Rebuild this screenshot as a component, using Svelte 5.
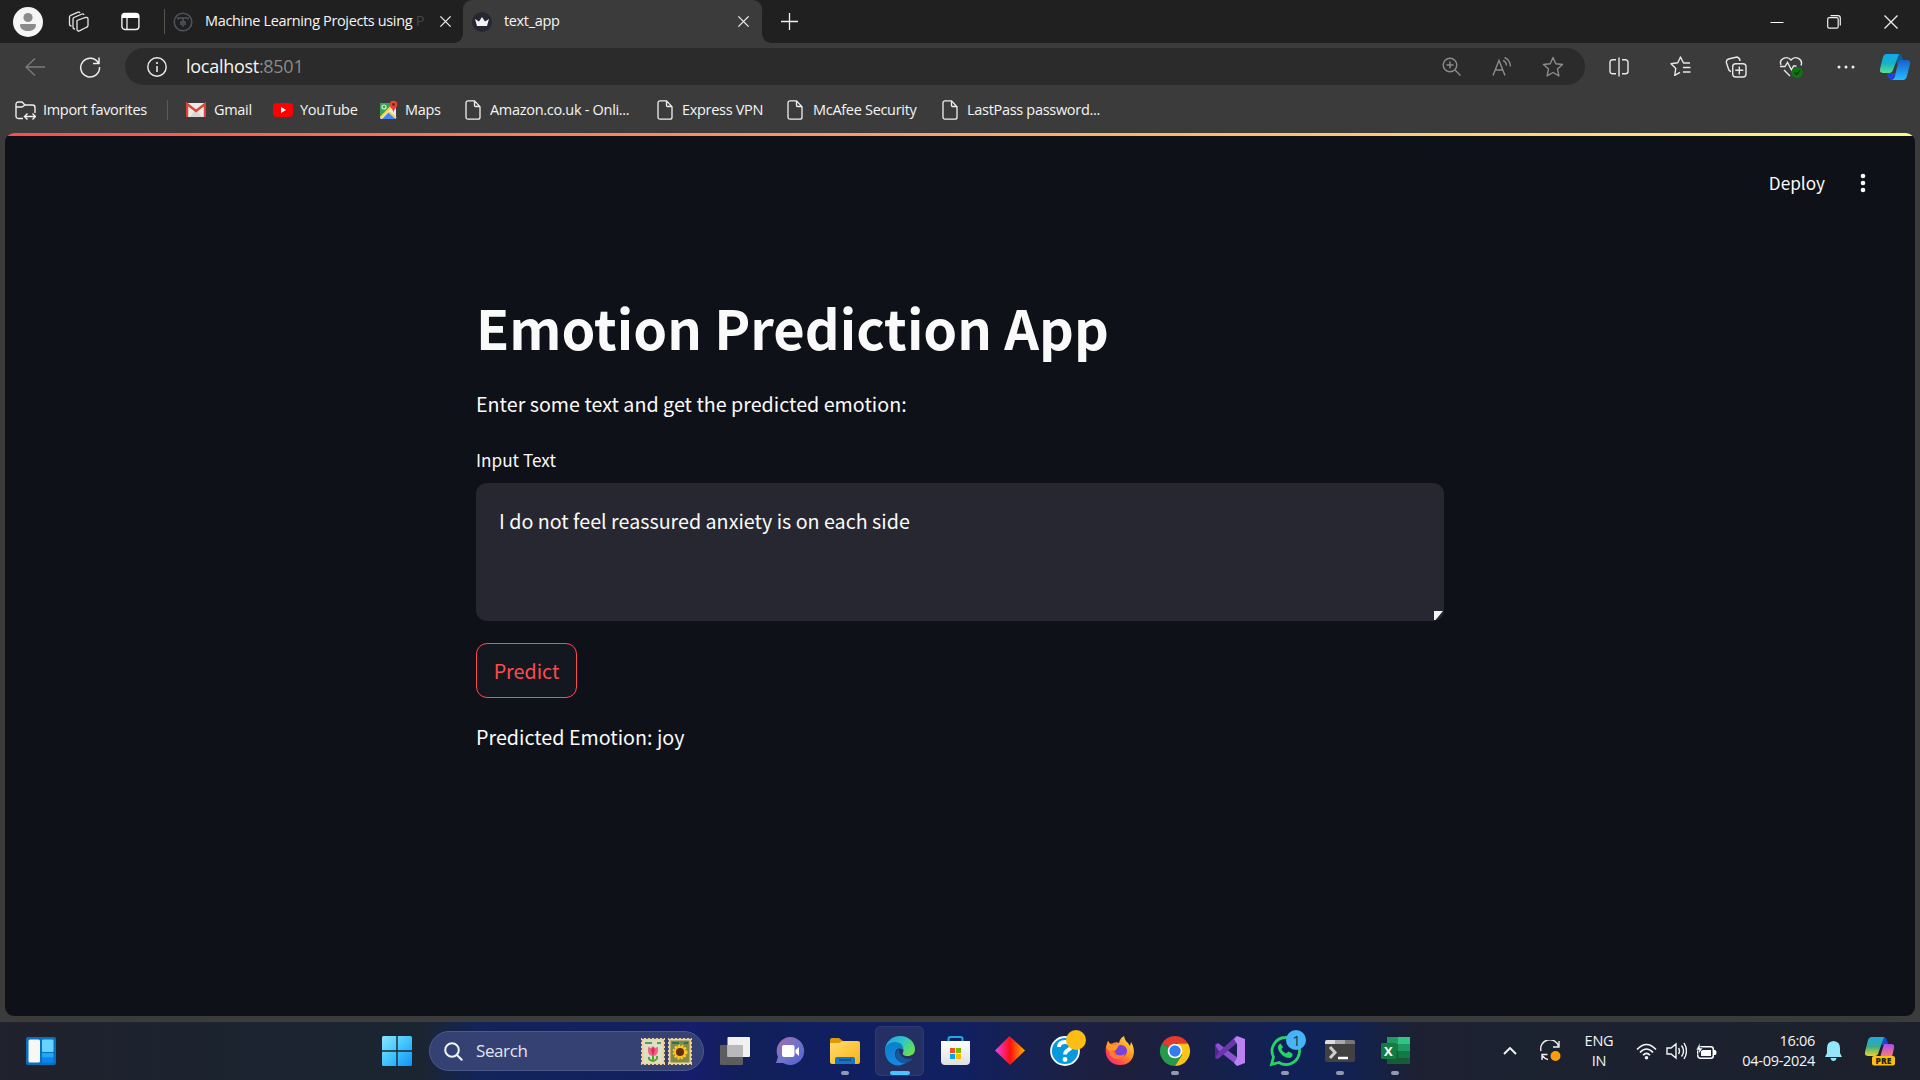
<script>
  const bookmarks = [
    { label: 'Gmail', icon: 'gmail', cls: 'b-gmail' },
    { label: 'YouTube', icon: 'youtube', cls: 'b-youtube' },
    { label: 'Maps', icon: 'maps', cls: 'b-maps' },
    { label: 'Amazon.co.uk - Onli...', icon: 'page', cls: 'b-amazon' },
    { label: 'Express VPN', icon: 'page', cls: 'b-vpn' },
    { label: 'McAfee Security', icon: 'page', cls: 'b-mcafee' },
    { label: 'LastPass password...', icon: 'page', cls: 'b-lastpass' },
  ];
  const apps = [
    { id: 'taskview' }, { id: 'chat' }, { id: 'explorer', open: true }, { id: 'edge', active: true },
    { id: 'store' }, { id: 'diamond' }, { id: 'help' }, { id: 'firefox' }, { id: 'chrome', open: true },
    { id: 'vs' }, { id: 'whatsapp', open: true }, { id: 'terminal', open: true }, { id: 'excel', open: true },
  ];
  const stampEdge = [2, 6, 10, 14, 18, 22];
  let input = $state('I do not feel reassured anxiety is on each side');
</script>

{#snippet cross(size)}
  <svg width={size} height={size} viewBox="0 0 14 14" fill="none" stroke="#eee" stroke-width="1.4"><path d="M1.5 1.5 12.5 12.5M12.5 1.5 1.5 12.5" /></svg>
{/snippet}

{#snippet bookmarkIcon(name)}
  {#if name === 'gmail'}
    <svg width="20" height="16" viewBox="0 0 20 16"><rect x="1" y="1" width="18" height="14" rx="1" fill="#eceae7" /><path d="M4 15 9 8h2l5 7z" fill="#d8d6d3" /><path d="M1 15V2l9 7 9-7v13" fill="none" stroke="#d9453b" stroke-width="2.4" /></svg>
  {:else if name === 'youtube'}
    <svg width="20" height="14" viewBox="0 0 20 14"><rect width="20" height="14" rx="3.5" fill="#f00" /><path d="m8 4 5 3-5 3z" fill="#fff" /></svg>
  {:else if name === 'maps'}
    <svg width="20" height="20" viewBox="0 0 20 20"><rect x="1" y="3" width="16" height="16" rx="1.5" fill="#e8eaed" /><path d="M1 17V4.500Q1 3 2.500 3H14L2 18z" fill="#34a353" /><path d="m3 19 7-7 7 7z" fill="#4485f3" /><path d="m1.500 17.500 13-13M10 12l7 6" stroke="#fdd24a" stroke-width="2" /><circle cx="5" cy="7" r="2" fill="none" stroke="#d9f1df" stroke-width="1.200" /><path d="M14.500 13C14.500 9 10.700 8 10.700 4.500a3.800 3.800 0 0 1 7.600 0C18.300 8 14.500 9 14.500 13z" fill="#e64435" /><circle cx="14.500" cy="4.500" r="1.400" fill="#7c1f18" /></svg>
  {:else}
    <svg width="16" height="20" viewBox="0 0 16 20" fill="none" stroke="#f0f0f0" stroke-width="1.300"><path d="M3 .8h6.500l5.500 6V17.200a2 2 0 0 1-2 2H3a2 2 0 0 1-2-2V2.800a2 2 0 0 1 2-2zM9.500 1v4.500a1 1 0 0 0 1 1H15" /></svg>
  {/if}
{/snippet}

{#snippet appIcon(id)}
  <svg width="36" height="36" viewBox="0 0 36 36">
    {#if id === 'taskview'}
      <rect x="3" y="12" width="23" height="20" rx="1" fill="#5d5d60" /><rect x="10.500" y="4" width="22.500" height="20" rx="1" fill="#f1f1f1" /><rect x="10.500" y="12" width="15.500" height="12" fill="#b9b9bb" />
    {:else if id === 'chat'}
      <defs><linearGradient id="chat" x1="0" y1="0" x2="1" y2="1"><stop stop-color="#a76ba6" /><stop offset=".5" stop-color="#7373ca" /><stop offset="1" stop-color="#4e5fd2" /></linearGradient></defs>
      <path d="M18 4a14 14 0 1 1-7 26H4l2-6A14 14 0 0 1 18 4z" fill="url(#chat)" /><rect x="10" y="12" width="12.500" height="12" rx="2" fill="#fff" /><path d="m23.500 17 3.500-3v9l-3.500-3z" fill="#fff" />
    {:else if id === 'explorer'}
      <defs><linearGradient id="folder" x1="0" y1="0" x2="1" y2="1"><stop stop-color="#ffdc70" /><stop offset="1" stop-color="#f8b414" /></linearGradient></defs>
      <path d="M3 7q0-2 2-2h7l4 3v7H3z" fill="#dc9a09" /><path d="M3 10h9l4-2h15q2 0 2 2v19q0 2-2 2H5q-2 0-2-2z" fill="url(#folder)" /><path d="M8 31v-5q0-2 2-2h16q2 0 2 2v5z" fill="#1676c5" /><path d="M12 27h12" stroke="#0c4584" stroke-width="1.300" />
    {:else if id === 'edge'}
      <defs><linearGradient id="edgetop" x1="0" y1="0" x2="1" y2=".6"><stop stop-color="#2999e8" /><stop offset=".5" stop-color="#2bc4cf" /><stop offset="1" stop-color="#66df52" /></linearGradient><linearGradient id="edgeblue" x1="0" y1="0" x2="0" y2="1"><stop stop-color="#087fc9" /><stop offset="1" stop-color="#1689e4" /></linearGradient></defs>
      <path d="M3 18C3 9 10 3 18 3c9 0 15 6.500 15 13 0 5-3.500 7-7 7-4 0-6-1.500-5-3.500C23 16 19 12 14 12c-5 0-9 2-11 6z" fill="url(#edgetop)" />
      <path d="M3 18c0-6 5-9 10-9 6 0 9 4 8 8-4-3-8-1-8 4 0 6 6 10 12 8-10 8-22 1-22-11z" fill="url(#edgeblue)" />
      <path d="M17 16c-5 3-4 10 2 14 5 1 9-1 12-5-7 3-14-1-14-9z" fill="#135a9d" />
    {:else if id === 'store'}
      <defs><linearGradient id="bag" x1="0" y1="0" x2="0" y2="1"><stop stop-color="#fff" /><stop offset="1" stop-color="#dedfe1" /></linearGradient></defs>
      <path d="M11.500 10V6q0-2 2-2h10q2 0 2 2v4" fill="none" stroke="#21a9e2" stroke-width="2" /><path d="M4 8h29v20q0 4-4 4H8q-4 0-4-4z" fill="url(#bag)" /><path d="M13 15h5v5h-5z" fill="#f25022" /><path d="M19 15h5v5h-5z" fill="#7fba00" /><path d="M13 21h5v5h-5z" fill="#00a4ef" /><path d="M19 21h5v5h-5z" fill="#ffb900" />
    {:else if id === 'diamond'}
      <defs><linearGradient id="dia"><stop stop-color="#f43df0" /><stop offset=".5" stop-color="#fa1010" /><stop offset="1" stop-color="#ffb000" /></linearGradient></defs><path d="M17.500 3 33 17.500 18 32 3 17.500z" fill="url(#dia)" />
    {:else if id === 'help'}
      <circle cx="18" cy="18" r="14" fill="#0699dc" stroke="#f4fbff" stroke-width="1.800" /><path d="M12 14q0-5 6-5 6 0 6 4.500c0 4-6 3-6 8" fill="none" stroke="#fff" stroke-width="3.800" /><circle cx="18" cy="26.500" r="2.400" fill="#fff" /><circle cx="29" cy="7" r="10" fill="#fdbd13" />
    {:else if id === 'firefox'}
      <defs><linearGradient id="fox" x1="1" y1="0" x2="0" y2="1"><stop stop-color="#fff35a" /><stop offset=".4" stop-color="#ff9a24" /><stop offset=".7" stop-color="#ff4a4b" /><stop offset="1" stop-color="#e819a0" /></linearGradient></defs>
      <path d="M6 8q1 3 3 3 5-3 8-1 1-5 5-7 1 5 4 7l2 3 1-4c6 9 3 23-11 23C6 32 0 20 6 8z" fill="url(#fox)" /><circle cx="19" cy="18" r="6" fill="#7542db" /><path d="M6 11c4 0 6-1 10 2-3 1-4 3-6 3 2 6 8 8 13 5-2 7-13 7-16-1-2-4-1-7-1-9z" fill="#ff7732" /><path d="m4 15 2-7 3 4 8 0-3 5-6 1z" fill="#ff9a27" />
    {:else if id === 'chrome'}
      <path d="M18 18 5 10.500A15 15 0 0 1 31 10.500H18z" fill="#e33b2e" /><path d="M5 10.500A15 15 0 0 0 18 33l7-11-7-4z" fill="#249b4b" /><path d="M31 10.500A15 15 0 0 1 18 33l7-11-5-11.500z" fill="#fcc419" /><circle cx="18" cy="18" r="7.300" fill="#fff" /><circle cx="18" cy="18" r="5.700" fill="#327cf0" />
    {:else if id === 'vs'}
      <path d="m3 12 3-2 20 15-1 7L3 15z" fill="#8b51cf" /><path d="M3 11v14l3 1 19-16-1-7L7 19z" fill="#6837a8" /><path d="m25 3 8 3v24l-8 3-3-3 3-5V11l-3-5z" fill="#b982f0" /><path d="m3 12 4 7-4 6z" fill="#582092" />
    {:else if id === 'whatsapp'}
      <path d="M18 4.500a13.500 13.500 0 1 1-6 25L4.500 31.500l2-7.500A13.500 13.500 0 0 1 18 4.500z" fill="none" stroke="#25d366" stroke-width="2.800" /><path d="M13.500 10.500q-4 2-2 6.500c2 5 7 8 11 8 3 0 4-4 2-5l-3-1.500-2.500 2c-2-1-4-3-4.500-4.500l1.500-2z" fill="#25d366" /><circle cx="29" cy="7" r="10" fill="#45b5f8" /><text x="29.500" y="12.500" text-anchor="middle" class="badge-text">1</text>
    {:else if id === 'terminal'}
      <path d="M3 9q0-2 2-2h26q2 0 2 2v18q0 2-2 2H5q-2 0-2-2z" fill="#414141" /><path d="M3 11V9q0-2 2-2h8v4z" fill="#dedede" /><path d="M13 7h10v4H13z" fill="#a9a9a9" /><path d="M23 7h8q2 0 2 2v2H23z" fill="#777" /><path d="m8 14 5 5.500-5 5.500" fill="none" stroke="#cfcfcf" stroke-width="3" /><path d="M16 25h10" stroke="#fff" stroke-width="2.500" />
    {:else if id === 'excel'}
      <path d="M10 4h23v27H10z" fill="#185c37" /><path d="M10 4h11v7H10zM21 11h12v7H21z" fill="#219962" /><path d="M21 4h12v7H21z" fill="#33c481" /><path d="M10 11h11v7H10z" fill="#19784a" /><path d="M21 18h12v7H21z" fill="#107c41" /><rect x="4" y="10" width="15.500" height="16" rx="1.500" fill="#117d43" /><text x="11.300" y="22.500" text-anchor="middle" class="excel-text">X</text>
    {/if}
  </svg>
{/snippet}

{#snippet stamp(kind)}
  <svg width="24" height="27" viewBox="0 0 24 27">
    <rect width="24" height="27" fill="#f2d39b" />
    {#each stampEdge as p}
      <circle cx={p} cy="0" r="1.100" fill="#354274" /><circle cx={p} cy="27" r="1.100" fill="#354274" />
      <circle cx="0" cy={p + 1} r="1.100" fill="#354274" /><circle cx="24" cy={p + 1} r="1.100" fill="#354274" />
    {/each}
    {#if kind === 'tulip'}
      <rect x="2.500" y="2.500" width="19" height="22" fill="#dce0c4" /><path d="M4 5h7M16 5h4" stroke="#4c9d72" stroke-width="2" /><path d="M12 24v-8M12 23q-5-1-4-4M12 23q5-1 4-5" stroke="#55a13a" stroke-width="2" fill="none" /><path d="m7 9 3 1 2-2 2 2 3-1q1 9-5 9T7 9z" fill="#f06288" /><path d="m10 12 2-3 2 3-2 6z" fill="#d62f58" />
    {:else}
      <rect x="2.500" y="2.500" width="19" height="22" fill="#7e8c48" /><path d="M4 5h7M16 5h4" stroke="#2b735a" stroke-width="2" /><circle cx="12" cy="14" r="6" fill="#ffb91b" stroke="#ffc928" stroke-width="3" stroke-dasharray="2 1.200" /><circle cx="12" cy="14" r="4" fill="#652c18" />
    {/if}
  </svg>
{/snippet}

<div class="screen">
  <header class="titlebar">
    <div class="cell profile"><svg width="30" height="30" viewBox="0 0 30 30"><circle cx="15" cy="15" r="15" fill="#f5f5f5" /><circle cx="15" cy="10.500" r="4.600" fill="#8a8a8a" /><path d="M8 17h14q1 0 1 1c0 4-4 6-8 6s-8-2-8-6q0-1 1-1z" fill="#8a8a8a" /></svg></div>
    <div class="cell workspaces"><svg width="22" height="22" viewBox="0 0 22 22" fill="none" stroke="#e5e5e5" stroke-width="1.300"><path d="m10 9.500 8.500-3q2.500-.5 2.500 1.500v6.500q0 1.500-2 2l-6.500 3.300q-2.500.8-2.500-1.800zM6 16.500V8q0-1 1-1.500l8-3.500q1.500-.5 2 1M2.500 13V6q0-1.200 1.200-1.700L11 1.200q1.500-.5 2 .8M2.500 13q0 2 2 2M6 16q0 2 2 2" /></svg></div>
    <div class="cell tabs-menu"><svg width="19" height="19" viewBox="0 0 19 19"><rect x=".9" y="1.500" width="17" height="16" rx="3" fill="none" stroke="#f3f3f3" stroke-width="1.400" /><path d="M1 6V4q0-3 3-3h11q3 0 3 3v2z" fill="#fff" /><path d="M6 6v11.500" stroke="#f3f3f3" stroke-width="1.300" /></svg></div>
    <div class="tab-divider"></div>
    <div class="tab inactive">
      <svg width="20" height="20" viewBox="0 0 20 20" fill="none" stroke="#4d535d"><circle cx="10" cy="10" r="8.800" stroke-width="1.600" /><path d="M5 7.500V6h10v1.500M10 6v8.500M8 9v4M12 9v4" stroke-width="1.700" /></svg>
      <span class="ml-title">Machine Learning Projects using <i>P</i></span>
      {@render cross(13)}
    </div>
    <div class="tab active">
      <svg width="20" height="20" viewBox="0 0 20 20"><circle cx="10" cy="10" r="10" fill="#262730" /><path d="m3 7 4 2.500L10 5l3 4.500L17 7l-2 7H5z" fill="#f3f3f3" /></svg>
      <span class="app-title">text_app</span>
      {@render cross(13)}
    </div>
    <svg class="new-tab" width="17" height="17" viewBox="0 0 17 17" stroke="#eee" stroke-width="1.300"><path d="M8.500 0v17M0 8.500h17" /></svg>
    <div class="window-controls">
      <svg width="14" height="14" viewBox="0 0 14 14"><path d="M.5 7.500h13" stroke="#fff" /></svg>
      <svg width="14" height="14" viewBox="0 0 14 14" fill="none" stroke="#f1f1f1" stroke-width="1.200"><rect x=".7" y="2.700" width="10.500" height="10.500" rx="1.500" /><path d="M3.500.7H11q2.300 0 2.300 2.300v7.500" /></svg>
      <svg width="14" height="14" viewBox="0 0 14 14" fill="none" stroke="#eee" stroke-width="1.300"><path d="m.5.5 13 13m0-13-13 13" /></svg>
    </div>
  </header>

  <nav class="toolbar">
    <svg class="back" width="20" height="20" viewBox="0 0 20 20" fill="none" stroke="#7c7c7c" stroke-width="1.300"><path d="M20 10H1M10 1.500 1 10l9 8.500" /></svg>
    <svg class="reload" width="22" height="22" viewBox="0 0 22 22" fill="none" stroke="#ededed" stroke-width="1.500"><path d="M19.500 7.300A9.400 9.400 0 1 0 20.500 11M20 1.500v6h-6" /></svg>
    <div class="address">
      <svg width="20" height="20" viewBox="0 0 20 20"><circle cx="10" cy="10" r="9.200" fill="none" stroke="#eee" stroke-width="1.400" /><path d="M10 9v6" stroke="#eee" stroke-width="1.500" /><circle cx="10" cy="6" r="1.100" fill="#eee" /></svg>
      <span class="url">localhost<em>:8501</em></span>
      <div class="address-tools">
        <svg width="20" height="20" viewBox="0 0 20 20" fill="none" stroke="#8c8c8c" stroke-width="1.400"><circle cx="8" cy="8" r="6.800" /><path d="m13 13 5.500 5.500M8 4.500v7M4.500 8h7" /></svg>
        <svg width="20" height="20" viewBox="0 0 20 20" fill="none" stroke="#8c8c8c" stroke-width="1.400"><path d="m1 18.500 6-15 6 15M3 13h8M11 3.500q3 1 3.500 5M12.500.5q5.500 2 6 9" /></svg>
        <svg width="22" height="22" viewBox="0 0 22 22" fill="none" stroke="#8c8c8c" stroke-width="1.400" stroke-linejoin="round"><path d="m11 1.500 2.800 6.200 6.700.8-5 4.600 1.400 6.700L11 16.500l-5.900 3.300 1.400-6.700-5-4.600 6.700-.8z" /></svg>
      </div>
    </div>
    <div class="actions">
      <svg width="20" height="20" viewBox="0 0 20 20" fill="none" stroke="#e8e8e8" stroke-width="1.400"><path d="M7 2.700H3.500a2.500 2.500 0 0 0-2.500 2.500v9a2.500 2.500 0 0 0 2.500 2.500H7M10 .5v19M13 2.700h3.500A2.500 2.500 0 0 1 19 5.200v9a2.500 2.500 0 0 1-2.500 2.500H13" /></svg>
      <svg width="21" height="21" viewBox="0 0 21 21" fill="none" stroke="#e8e8e8" stroke-width="1.400" stroke-linejoin="round"><path d="M20 7h-6.500L10.500 1 7.800 6.800 1 7.700l4.800 4.700-1.100 7 5.300-3M13 11.500h7.500M13 16h7.500" /></svg>
      <svg width="22" height="22" viewBox="0 0 22 22" fill="none" stroke="#e8e8e8" stroke-width="1.400"><rect x="7.700" y="7.700" width="13.300" height="13.300" rx="3" /><path d="M14.300 10.500v8M10.300 14.300h8M15 5q0-3-3-4L3.500 3Q.8 4 1.500 7l2 6q.5 2 2.500 2.500" /></svg>
      <svg width="24" height="24" viewBox="0 0 24 24" fill="none" stroke="#e8e8e8" stroke-width="1.400"><path d="M2 10C-.5 4 8 0 12 5c4-5 12.500-1 10 5.500M1 11.500h5l2.500-4 4 7.500 2-4h3M5 15l6 6" /><circle cx="18" cy="17.500" r="5.700" fill="#0f7511" stroke="none" /><path d="m15.500 17.500 2 2 3.300-4" stroke="#163316" /></svg>
      <svg width="20" height="20" viewBox="0 0 20 20" fill="#eee"><circle cx="3" cy="10" r="1.500" /><circle cx="10" cy="10" r="1.500" /><circle cx="17" cy="10" r="1.500" /></svg>
      <svg width="30" height="28" viewBox="0 0 30 28"><defs><linearGradient id="cpl" x1="0" y1="0" x2="0" y2="1"><stop stop-color="#10a9e6" /><stop offset=".5" stop-color="#15b3c7" /><stop offset="1" stop-color="#5bdf8b" /></linearGradient><linearGradient id="cpr" x1="0" y1="0" x2="0" y2="1"><stop stop-color="#1860ce" /><stop offset="1" stop-color="#25bbff" /></linearGradient></defs><path d="M12 27q-4 0-5-7h10z" fill="#1c43dc" /><path d="M16 1h4q2 0 3 6l-6 4z" fill="#095e94" /><path d="M6 1h13l-6 16q-1 3-4 3H3q-4 0-3-4L3 4q1-3 3-3z" fill="url(#cpl)" /><path d="M20 7h7q4 0 3 4l-3 12q-1 4-4 4H11q3 0 4-4l3-13q1-3 2-3z" fill="url(#cpr)" /></svg>
    </div>
  </nav>

  <nav class="bookmarks">
    <div class="bookmark b-import"><svg width="21" height="19" viewBox="0 0 21 19" fill="none" stroke="#f0f0f0" stroke-width="1.400"><path d="M8 17.500H3.500Q1 17.500 1 15V3.500Q1 1 3.500 1H7l3 3h7.500Q20 4 20 6.500V12M1 6h6l3-2M10 15.500h10M12.500 12.500l-3 3 3 3M17.500 12.500l3 3-3 3" /></svg><span>Import favorites</span></div>
    <div class="bookmark-divider"></div>
    {#each bookmarks as b}
      <div class="bookmark {b.cls}">{@render bookmarkIcon(b.icon)}<span>{b.label}</span></div>
    {/each}
  </nav>

  <main class="page">
    <div class="decoration"></div>
    <div class="app-header"><span>Deploy</span><svg width="6" height="20" viewBox="0 0 6 20" fill="#fafafa"><circle cx="3" cy="3" r="2.300" /><circle cx="3" cy="10" r="2.300" /><circle cx="3" cy="17" r="2.300" /></svg></div>
    <section class="content">
      <h1>Emotion Prediction App</h1>
      <p class="intro">Enter some text and get the predicted emotion:</p>
      <label for="emotion-input">Input Text</label>
      <div class="field"><textarea id="emotion-input" bind:value={input} spellcheck="false"></textarea><svg class="grip" width="9" height="9" viewBox="0 0 9 9"><path d="M0 0h9L1.500 9H0z" fill="#f4f4f4" /></svg></div>
      <button>Predict</button>
      <p class="result">Predicted Emotion: joy</p>
    </section>
  </main>

  <footer class="taskbar">
    <svg class="widgets" width="30" height="28" viewBox="0 0 30 28"><rect width="30" height="28" rx="2" fill="#0870bd" /><rect x="2.500" y="2.500" width="11.500" height="23" rx="1.500" fill="#f7f7f7" /><rect x="16" y="2.500" width="11.500" height="12.500" rx="1" fill="#65d3ff" /><path d="M16 16h11.500v4.500H16z" fill="#25a7f6" /><path d="M16 21h11.500v4.500H16z" fill="#0b84ed" /></svg>
    <svg class="start" width="30" height="30" viewBox="0 0 30 30"><defs><linearGradient id="win" x1="0" y1="0" x2="1" y2="1"><stop stop-color="#8be4ff" /><stop offset=".5" stop-color="#42c4fc" /><stop offset="1" stop-color="#0c95f8" /></linearGradient></defs><path d="M1.500 0H14.300v14.300H0V1.500Q0 0 1.500 0zM15.700 0H28.500Q30 0 30 1.500v12.800H15.700zM0 15.700h14.300V30H1.500Q0 30 0 28.500zM15.700 15.700H30v12.800Q30 30 28.500 30H15.700z" fill="url(#win)" /></svg>
    <div class="search"><svg width="19" height="19" viewBox="0 0 19 19" fill="none" stroke="#f2f4fb" stroke-width="2"><circle cx="8" cy="8" r="6.800" /><path d="m12.700 12.700 5 5" stroke-linecap="round" /></svg><span>Search</span><div class="stamps">{@render stamp('tulip')}{@render stamp('sunflower')}</div></div>
    <div class="apps">
      {#each apps as a}
        <div class="task-app" class:active={a.active} class:open={a.open}>{@render appIcon(a.id)}</div>
      {/each}
    </div>
    <div class="tray">
      <svg class="t-chevron" width="14" height="8" viewBox="0 0 14 8" fill="none" stroke="#f5f5f5" stroke-width="1.900"><path d="m1 7 6-6 6 6" /></svg>
      <svg class="t-sync" width="21" height="22" viewBox="0 0 21 22" fill="none" stroke="#f0f0f0" stroke-width="1.400"><path d="M1 11A9 9 0 0 1 18.500 6.500M19 1v6h-6M8 19.500q-3-.5-6-4M2 20v-5.500h5.500" /><circle cx="15.500" cy="16" r="5" fill="#ff9c09" stroke="none" /></svg>
      <div class="lang"><span>ENG</span><span>IN</span></div>
      <svg class="t-wifi" width="21" height="17" viewBox="0 0 21 17" fill="none" stroke="#f5f5f5" stroke-width="1.600"><path d="M1 6.500Q10.500-3.500 20 6.500M4 9.500q6.500-7 13 0M7 12.300q3.500-3.800 7 0" /><circle cx="10.500" cy="14.700" r="1.800" fill="#f5f5f5" stroke="none" /></svg>
      <svg class="t-sound" width="21" height="18" viewBox="0 0 21 18" fill="none" stroke="#f5f5f5" stroke-width="1.400"><path d="M1 6h4l5-4v14l-5-4H1zM12.500 6q2 3 0 6M15.500 3.500q4 5.500 0 11M18 1q5 8 0 16" /></svg>
      <svg class="t-battery" width="21" height="17" viewBox="0 0 21 17"><rect x="1.800" y="3.800" width="15.500" height="11.500" rx="2.500" fill="none" stroke="#fff" stroke-width="1.500" /><path d="M5 12V8l2-1h8v6H5zM18 7h1q1.500 0 1.500 2.500T19 12h-1z" fill="#fff" /><path d="M4-.5 0 7h3l-1 5 5-7H4z" fill="#fff" stroke="#1c2230" stroke-width=".6" /></svg>
      <div class="clock"><span>16:06</span><span>04-09-2024</span></div>
      <svg class="t-bell" width="17" height="20" viewBox="0 0 17 20" fill="#94e7fb"><path d="M8.500 0Q15 .5 15 7v5l2 4H0l2-4V7Q2 .5 8.500 0zM5.500 17h6q-.5 3-3 3t-3-3z" /></svg>
      <svg class="t-copilot" width="30" height="29" viewBox="0 0 30 29"><defs><linearGradient id="prl" x1="0" y1="0" x2="0" y2="1"><stop stop-color="#20a7ed" /><stop offset=".5" stop-color="#38ad8c" /><stop offset="1" stop-color="#eed223" /></linearGradient><linearGradient id="prr" x1="0" y1="0" x2="0" y2="1"><stop stop-color="#ad4bf0" /><stop offset="1" stop-color="#fa8078" /></linearGradient></defs><path d="M14 0h5q3 0 4 8h-6z" fill="#174ac3" /><path d="M7 0h12l-6 17q-1 2-3 2H3q-4 0-3-4L3 3q1-3 4-3z" fill="url(#prl)" /><path d="M19 7h7q4 0 3 4l-2 9H13q3 0 3-3z" fill="url(#prr)" /><rect x="7" y="19" width="23" height="9.500" rx="2" fill="#fcc011" /><text x="18.500" y="26.800" text-anchor="middle" class="pre-text">PRE</text></svg>
    </div>
  </footer>
</div>

<style>
  :global(body) { margin: 0; overflow: hidden; background: #3b3b3b; }
  * { box-sizing: border-box; }
  svg { display: block; flex: none; }
  .screen { width: 1920px; height: 1080px; display: flex; flex-direction: column; background: #3b3b3b; color: #f5f5f5; font-family: "Open Sans", "Noto Sans", sans-serif; white-space: nowrap; }
  .titlebar { height: 43px; flex: none; display: flex; align-items: center; background: #202020; }
  .cell { display: flex; justify-content: center; flex: none; }
  .profile { width: 56px; }
  .workspaces { width: 43px; }
  .tabs-menu { width: 62px; }
  .tab-divider { width: 1px; height: 25px; margin-left: 3px; background: #555; }
  .tab { height: 43px; display: flex; align-items: center; flex: none; font-size: 14.500px; }
  .inactive { width: 298px; padding-left: 8px; }
  .ml-title { width: 228px; margin: 0 6px 3px 12px; overflow: hidden; letter-spacing: -.36px; }
  .ml-title i { font-style: normal; color: #454545; }
  .active.tab { position: relative; width: 299px; padding-left: 9px; background: #3b3b3b; border-radius: 9px 9px 0 0; }
  .active.tab::before, .active.tab::after { content: ""; position: absolute; bottom: 0; width: 9px; height: 9px; }
  .active.tab::before { left: -9px; background: radial-gradient(circle at 0 0, #202020 8.500px, #3b3b3b 9px); }
  .active.tab::after { right: -9px; background: radial-gradient(circle at 100% 0, #202020 8.500px, #3b3b3b 9px); }
  .app-title { width: 233px; margin: 0 0 3px 12px; letter-spacing: -.35px; }
  .new-tab { margin-left: 19px; }
  .window-controls { display: flex; gap: 43px; margin-left: auto; padding-right: 22px; }

  .toolbar { height: 47px; flex: none; display: flex; align-items: center; padding-left: 25px; }
  .back { margin-right: 34px; }
  .reload { margin-right: 24px; }
  .address { width: 1460px; height: 37px; display: flex; align-items: center; padding-left: 22px; border-radius: 19px; background: #2b2b2b; }
  .url { margin: 0 0 2px 19px; font-size: 18px; letter-spacing: -.28px; }
  .url em { font-style: normal; color: #8a8a8a; }
  .address-tools { display: flex; gap: 30px; margin-left: auto; padding-right: 21px; align-items: center; }
  .actions { width: 331px; display: grid; grid-template-columns: 12px 55px 56px 55px 55px 55px 43px; align-items: center; justify-items: center; margin-left: 0; }
  .actions svg:first-child { grid-column: 1 / 3; }
  .bookmarks { height: 43px; flex: none; display: flex; align-items: center; padding: 0 0 3px 15px; font-size: 14.500px; letter-spacing: -.3px; }
  .bookmark { display: flex; align-items: center; flex: none; }
  .bookmark span { padding-bottom: 1px; }
  .b-import { width: 152px; gap: 7px; }
  .bookmark-divider { width: 1px; height: 20px; margin-right: 18px; background: #5a5a5a; }
  .b-gmail { width: 87px; gap: 8px; }
  .b-youtube { width: 106px; gap: 7px; }
  .b-maps { width: 86px; gap: 6px; }
  .b-amazon { width: 192px; gap: 9px; }
  .b-vpn { width: 130px; gap: 9px; }
  .b-mcafee { width: 155px; gap: 10px; }
  .b-lastpass { gap: 9px; }

  .page { height: 883px; flex: none; margin: 0 5px 5px; border-radius: 9px; overflow: hidden; background: #0e1117; color: #fafafa; font-family: "Noto Sans CJK SC", "Noto Sans", sans-serif; font-size: 19.700px; }
  .decoration { height: 3px; background: linear-gradient(90deg, #ff4b4b, #fffd80); }
  .app-header { height: 93px; display: flex; align-items: center; justify-content: flex-end; gap: 35px; padding-right: 49px; font-size: 17.200px; }
  .content { width: 968px; margin: 61px auto 0; display: flex; flex-direction: column; align-items: flex-start; }
  h1 { margin: 0; font-size: 54.200px; line-height: 73px; font-weight: 700; }
  p { margin: 0; line-height: 35px; }
  .intro { margin-top: 23px; }
  label { margin-top: 26px; font-size: 17.200px; line-height: 26px; }
  .field { position: relative; width: 968px; height: 138px; margin-top: 10px; display: flex; border-radius: 11px; background: #262730; overflow: hidden; }
  textarea { flex: 1; padding: 20px 23px; border: 0; outline: 0; resize: none; background: transparent; color: #fafafa; font: inherit; line-height: 35px; }
  .grip { position: absolute; right: 1px; bottom: 1px; }
  button { width: 101px; height: 55px; margin-top: 22px; padding: 0; border: 1px solid #ff4b4b; border-radius: 11px; background: #131720; color: #ff4b4b; font: inherit; }
  .result { margin-top: 21px; }

  .taskbar { position: relative; height: 59px; flex: none; display: flex; align-items: center; padding-left: 26px; border-top: 1px solid #353d50; background: linear-gradient(90deg, #20222d 0, #1b2430 13%, #1b2532 22%, #12245a 25%, #13205f 34%, #171d6b 36%, #102058 39%, #111f60 42%, #102061 50%, #1c2043 56%, #1d1f3b 59%, #102158 67%, #112153 70%, #1d2031 74%, #1b2230 79%, #1b202c 100%); }
  .widgets { margin-right: 326px; }
  .start { margin-right: 17px; margin-left: 0; }
  .search { width: 275px; height: 40px; display: flex; align-items: center; padding: 0 11px 0 14px; border: 1px solid #4b5a8d; border-radius: 20px; background: #354173; color: #e3e6f1; font-size: 17px; letter-spacing: -.4px; }
  .search span { margin: 0 0 2px 13px; }
  .stamps { display: flex; gap: 3px; margin-left: auto; }
  .apps { display: flex; margin-left: 3px; align-items: center; }
  .task-app { width: 49px; height: 50px; margin: 0 3px; display: flex; align-items: center; justify-content: center; position: relative; border-radius: 6px; }
  .task-app svg { overflow: visible; }
  .task-app.active { background: #243064; box-shadow: inset 0 0 0 1px #303a70; }
  .task-app::after { position: absolute; bottom: 1px; height: 4px; border-radius: 2px; }
  .task-app.open::after { content: ""; width: 8px; background: #9299b2; }
  .task-app.active::after { content: ""; width: 20px; background: #4cc2ff; }
  .badge-text { font: 15px "Open Sans", sans-serif; fill: #15384d; }
  .excel-text { font: 700 13px "Open Sans", sans-serif; fill: #fff; }
  .pre-text { font: 800 8.500px "Open Sans", sans-serif; fill: #272009; }
  .tray { display: flex; align-items: center; margin-left: auto; padding-right: 25px; font-size: 14.500px; }
  .t-sync { margin-left: 23px; }
  .lang { width: 44px; margin-left: 16px; display: flex; flex-direction: column; align-items: center; line-height: 20px; letter-spacing: -.2px; }
  .t-wifi { margin-left: 15px; }
  .t-sound { margin-left: 9px; }
  .t-battery { margin-left: 9px; }
  .clock { width: 90px; margin-left: 8px; display: flex; flex-direction: column; align-items: flex-end; line-height: 20px; letter-spacing: -.3px; }
  .t-bell { margin-left: 10px; }
  .t-copilot { margin-left: 23px; }
</style>
